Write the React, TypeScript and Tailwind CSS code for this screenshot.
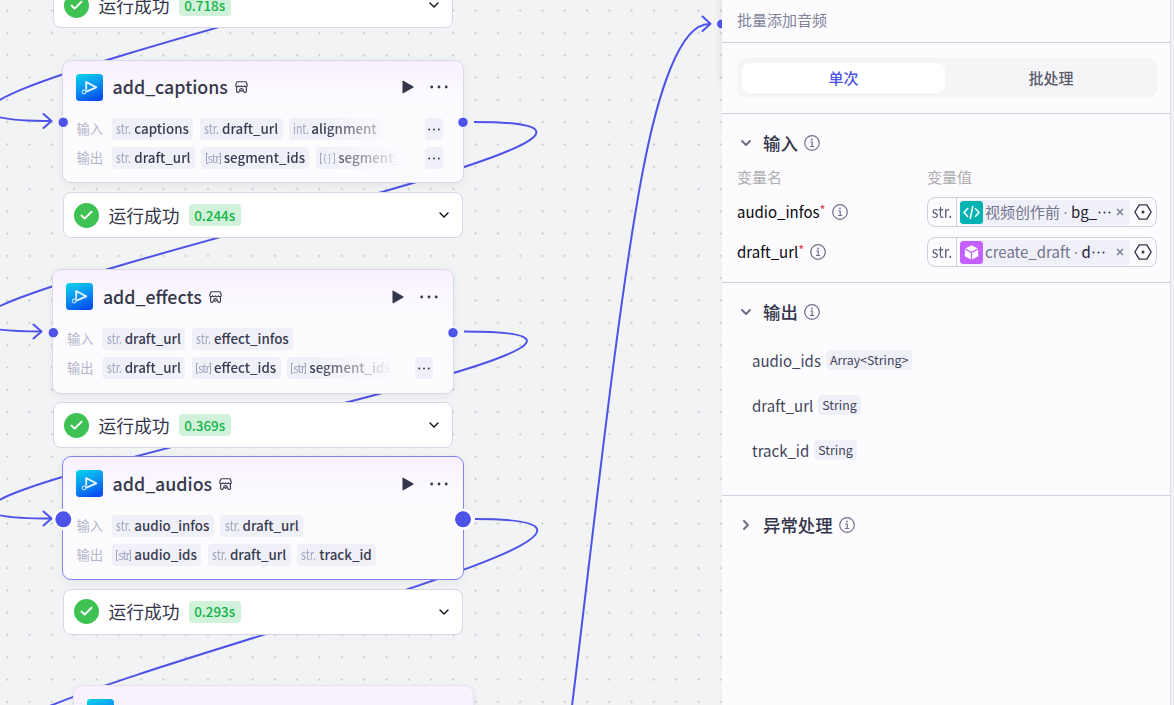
import React from 'react';
import { Check, ChevronDown, ChevronRight } from 'lucide-react';

type Variable = { type: string; name: string };

type NodeData = {
  title: string;
  position: string;
  selected?: boolean;
  inputs: Variable[];
  outputs: Variable[];
  moreInputs?: boolean;
  moreOutputs?: boolean;
};

const nodes: NodeData[] = [
  {
    title: 'add_captions',
    position: 'left-[62px] top-[59.5px] w-[402px] h-[123.5px]',
    inputs: [
      { type: 'str', name: 'captions' },
      { type: 'str', name: 'draft_url' },
      { type: 'int', name: 'alignment' }
    ],
    outputs: [
      { type: 'str', name: 'draft_url' },
      { type: '[str]', name: 'segment_ids' },
      { type: '[{}]', name: 'segment_' }
    ],
    moreInputs: true,
    moreOutputs: true
  },
  {
    title: 'add_effects',
    position: 'left-[52.4px] top-[269.4px] w-[401.4px] h-[124.4px]',
    inputs: [
      { type: 'str', name: 'draft_url' },
      { type: 'str', name: 'effect_infos' }
    ],
    outputs: [
      { type: 'str', name: 'draft_url' },
      { type: '[str]', name: 'effect_ids' },
      { type: '[str]', name: 'segment_ids' }
    ],
    moreOutputs: true
  },
  {
    title: 'add_audios',
    position: 'left-[62px] top-[456.4px] w-[402px] h-[124px]',
    selected: true,
    inputs: [
      { type: 'str', name: 'audio_infos' },
      { type: 'str', name: 'draft_url' }
    ],
    outputs: [
      { type: '[str]', name: 'audio_ids' },
      { type: 'str', name: 'draft_url' },
      { type: 'str', name: 'track_id' }
    ]
  }
];

const results = [
  { time: '0.718s', position: 'left-[53px] top-[-18px]' },
  { time: '0.244s', position: 'left-[63px] top-[192px]' },
  { time: '0.369s', position: 'left-[53px] top-[402px]' },
  { time: '0.293s', position: 'left-[63px] top-[588.5px]' }
];

const wires = [
  'M464 -89 C789 -89 -273 121 52 121',
  'M474 122 C802 122 -286 331.5 42 331.5',
  'M464 331.5 C790 331.5 -274 518.5 52 518.5',
  'M475 519 C799 519 -262 747.5 63 747.5',
  'M572 706 C592 545 618 300 643 170 C658 92 680 24 709 24'
];

const arrows = ['M43.5 114 L51.5 121 L43.5 128', 'M33.5 324.5 L41.5 331.5 L33.5 338.5', 'M43.5 511.5 L51.5 518.5 L43.5 525.5', 'M702.5 16.5 L710.5 23.8 L702.5 31'];

const ports = [
  { x: 63.2, y: 122.3, r: 4.7 },
  { x: 463, y: 122.3, r: 4.7 },
  { x: 53.3, y: 332.7, r: 4.7 },
  { x: 453, y: 332.7, r: 4.7 },
  { x: 63.3, y: 519.3, r: 8 },
  { x: 463, y: 519.3, r: 8 },
  { x: 721.5, y: 24, r: 4.5 }
];

const PluginIcon = () => (
  <svg className="size-[27px] shrink-0" viewBox="0 0 27 27" fill="none">
    <defs>
      <linearGradient id="plugin" x1="6" y1="0" x2="17" y2="27" gradientUnits="userSpaceOnUse">
        <stop stopColor="#08cdea" />
        <stop offset="0.45" stopColor="#0a98f2" />
        <stop offset="1" stopColor="#074df0" />
      </linearGradient>
    </defs>
    <rect width="27" height="27" rx="3.5" fill="url(#plugin)" />
    <path d="M10.2 15.8V8L20.3 13.4L9.8 17.8" stroke="#e4f4ff" strokeWidth="1.9" strokeLinejoin="round" />
    <circle cx="8.1" cy="18" r="1.9" stroke="#bfe4ff" strokeWidth="1.1" />
  </svg>
);

const StoreIcon = () => (
  <svg className="ml-[7px] h-[12px] w-[13px] shrink-0" viewBox="0 0 13 12" fill="none" stroke="#3b3d50" strokeWidth="1.15" strokeLinejoin="round" strokeLinecap="round">
    <path d="M2.6 0.7H10.4Q11.3 0.7 11.5 1.5L12.3 4.4C12.3 5.9 10.1 6.1 9.4 4.8C8.8 6 7.1 6 6.5 4.8C5.9 6 4.2 6 3.6 4.8C2.9 6.1 0.7 5.9 0.7 4.4L1.5 1.5Q1.7 0.7 2.6 0.7Z" />
    <path d="M1.6 6.2V10.4Q1.6 11.3 2.5 11.3H3.7L4.8 9.3L6.5 10.3L8.2 9.3L9.3 11.3H10.5Q11.4 11.3 11.4 10.4V6.2" />
    <path d="M4.6 8.2L6.5 7.6L8.4 8.2" />
  </svg>
);

const InfoIcon = () => (
  <svg className="size-4 shrink-0" viewBox="0 0 16 16" fill="none" stroke="#6c6f87" strokeWidth="1.2">
    <circle cx="8" cy="8" r="7.3" />
    <path d="M6.3 7H8.2V11.3M6 11.5H10.2" />
    <circle cx="7.9" cy="4.5" r="0.9" fill="#6c6f87" stroke="none" />
  </svg>
);

const HexIcon = () => (
  <svg className="h-4 w-[18px] shrink-0" viewBox="0 0 18 16" fill="none" stroke="#33354a" strokeWidth="1.4" strokeLinejoin="round">
    <path d="M5.2 0.9H12.8L17.1 8L12.8 15.1H5.2L0.9 8Z" />
    <circle cx="9" cy="8" r="1.5" fill="#33354a" stroke="none" />
  </svg>
);

const Dots = ({ small }: { small?: boolean }) => (
  <svg className={small ? 'h-[3px] w-[12px]' : 'h-[4px] w-[18px]'} viewBox={small ? '0 0 12 3' : '0 0 18 4'} fill="#33354a">
    {small ? (
      <>
        <circle cx="1.2" cy="1.5" r="0.95" />
        <circle cx="6" cy="1.5" r="0.95" />
        <circle cx="10.8" cy="1.5" r="0.95" />
      </>
    ) : (
      <>
        <circle cx="1.7" cy="2" r="1.4" />
        <circle cx="9" cy="2" r="1.4" />
        <circle cx="16.2" cy="2" r="1.4" />
      </>
    )}
  </svg>
);

const TypeLabel = ({ type }: { type: string }) => {
  if (type === '[str]') {
    return (
      <span className="flex w-[16px] shrink-0 items-center text-[#a2a4bd]">
        <span className="h-[11px] w-[2px] border-y border-l border-[#a2a4bd]" />
        <span className="flex w-[11px] justify-center text-[11.5px] leading-3 tracking-[-0.9px]">str</span>
        <span className="h-[11px] w-[2px] border-y border-r border-[#a2a4bd]" />
      </span>
    );
  }
  if (type === '[{}]') {
    return (
      <span className="flex w-[16px] shrink-0 items-center text-[#a2a4bd]">
        <span className="h-[11px] w-[2px] border-y border-l border-[#a2a4bd]" />
        <span className="flex w-[11px] justify-center text-[10px] leading-3 tracking-[1px]">{'{}'}</span>
        <span className="h-[11px] w-[2px] border-y border-r border-[#a2a4bd]" />
      </span>
    );
  }
  return (
    <span className="flex h-5 w-[16px] shrink-0 items-center pb-[2px]">
      <span className="inline-block origin-left scale-x-[0.75] text-[14px] leading-4 text-[#a2a4bd]">{type}.</span>
    </span>
  );
};

const VariableRow = ({ label, items, more }: { label: string; items: Variable[]; more?: boolean }) => (
  <div className="flex h-[22px] items-center">
    <span className="w-[36px] shrink-0 pl-[0.5px] text-[13.3px] text-[#b4b5c9]">{label}</span>
    <div
      className={
        more
          ? 'flex w-[292px] shrink-0 gap-[6.5px] [mask-image:linear-gradient(90deg,#000_73%,transparent_100%)]'
          : 'flex gap-[6.5px]'
      }
    >
      {items.map((item, index) => (
        <span key={index} className="flex h-[22px] shrink-0 items-center gap-[2px] rounded-[4px] bg-[#f0f0f8] px-[4.3px]">
          <TypeLabel type={item.type} />
          <span className="text-[13.35px] font-medium leading-5 text-[#393b50]">{item.name}</span>
        </span>
      ))}
    </div>
    {more && (
      <span className="ml-[20.5px] flex h-[22px] w-[18px] items-center justify-center rounded-[4px] bg-[#f0f0f8]">
        <Dots small />
      </span>
    )}
  </div>
);

const FlowNode = ({ node }: { node: NodeData }) => (
  <div
    className={`absolute ${node.position} rounded-[9px] border bg-[#fcfcff] bg-linear-to-b from-[#f9f0ff] to-[#fcfcff] to-35% px-[13px] pt-[13px] shadow-[0_2px_8px_rgba(0,0,0,0.06)] ${
      node.selected ? 'border-[#8583f3]' : 'border-[#d8d8e8]'
    }`}
  >
    <div className="flex h-[27px] items-center">
      <PluginIcon />
      <span className="-mt-[2px] ml-[9.5px] text-[17.8px] font-medium leading-6 text-[#35374a]">{node.title}</span>
      <StoreIcon />
      <svg className="ml-auto h-[14px] w-[12px]" viewBox="0 0 12 14" fill="#33354a">
        <path d="M0.5 1.2Q0.5 0.4 1.3 0.8L11.4 6.4Q12 7 11.4 7.6L1.3 13.2Q0.5 13.6 0.5 12.8Z" />
      </svg>
      <span className="ml-[16px] mr-[2px] flex items-center">
        <Dots />
      </span>
    </div>
    <div className="mt-[17.6px] flex flex-col gap-[7.3px]">
      <VariableRow label="输入" items={node.inputs} more={node.moreInputs} />
      <VariableRow label="输出" items={node.outputs} more={node.moreOutputs} />
    </div>
  </div>
);

const RunResult = ({ time, position }: { time: string; position: string }) => (
  <div className={`absolute ${position} flex h-[46px] w-[399.5px] items-center rounded-[8px] border border-[#d6d6e4] bg-white pl-[9.5px] pr-[10px]`}>
    <span className="flex size-[25px] items-center justify-center rounded-full bg-[#3ec254] text-white">
      <Check size={15} strokeWidth={3} />
    </span>
    <span className="ml-[10px] text-[17.8px] text-[#33354a]">运行成功</span>
    <span className="ml-[9px] flex h-[22px] w-[52px] items-center justify-center rounded-[4px] bg-[#d2f1db] text-[13.4px] font-medium text-[#10b546]">
      {time}
    </span>
    <ChevronDown className="ml-auto text-[#101018]" size={16} strokeWidth={2.1} />
  </div>
);

const Canvas = () => (
  <div className="relative h-[705px] w-[722px] shrink-0 overflow-hidden bg-[#f2f3f5]">
    <svg className="absolute inset-0" width="722" height="705" fill="none">
      <defs>
        <pattern id="grid" x="-3.85" y="-0.55" width="22.3" height="22.3" patternUnits="userSpaceOnUse">
          <circle cx="11.15" cy="11.15" r="0.95" fill="#b9babf" />
        </pattern>
      </defs>
      <rect width="722" height="705" fill="url(#grid)" />
      {wires.map((d) => (
        <path key={d} d={d} stroke="#4d53e8" strokeWidth="2" />
      ))}
      {arrows.map((d) => (
        <path key={d} d={d} stroke="#4d53e8" strokeWidth="2" strokeLinecap="round" strokeLinejoin="round" />
      ))}
    </svg>

    {nodes.map((node) => (
      <FlowNode key={node.title} node={node} />
    ))}
    {results.map((result) => (
      <RunResult key={result.time} {...result} />
    ))}

    <div className="absolute left-[73px] top-[685px] h-[124px] w-[401px] rounded-[9px] border border-[#e3e1ee] bg-[#f9f1fe] px-[13px] pt-[13px] shadow-[0_2px_8px_rgba(0,0,0,0.06)]">
      <PluginIcon />
    </div>
    <div className="absolute left-[722px] top-[-38px] h-[122px] w-[401px] rounded-[9px] shadow-[0_2px_10px_rgba(0,0,0,0.1)]" />

    <svg className="absolute inset-0" width="722" height="705">
      {ports.map((port, index) => (
        <circle key={index} cx={port.x} cy={port.y} r={port.r + (port.r > 6 ? 1.3 : 0.5)} fill="#4d53e8" stroke="#fff" strokeWidth={port.r > 6 ? 2.6 : 1} />
      ))}
    </svg>
  </div>
);

const InputRow = ({ name, icon, source, field }: { name: string; icon: React.ReactNode; source: string; field: string }) => (
  <div className="flex h-[40px] items-center">
    <div className="flex w-[190px] shrink-0 items-center text-[15px] text-[#08080d]">
      {name}
      <span className="-mt-1 mr-[6px] text-[13px] text-[#e5404a]">*</span>
      <InfoIcon />
    </div>
    <div className="flex h-[30px] w-[230px] shrink-0 items-center rounded-[8px] border border-[#cdcde0]">
      <span className="flex h-full w-[29px] shrink-0 items-center justify-center border-r border-[#cdcde0] text-[15.5px] text-[#5c5f78]">
        <span className="inline-block scale-x-[0.93]">str.</span>
      </span>
      <div className="ml-[3px] flex h-[25px] w-[170px] shrink-0 items-center rounded-[4px] bg-[#f0f0f8]">
        {icon}
        <span className="ml-[2px] whitespace-nowrap text-[15px] text-[#73758e]">{source}</span>
        <span className="flex w-[11px] shrink-0 justify-center font-['Open_Sans',sans-serif] text-[15px] text-[#73758e]">·</span>
        <span className="text-[15px] text-[#1f2133]">{field}</span>
        <svg className="ml-px h-[3px] w-[13px] shrink-0" viewBox="0 0 13 3" fill="#33354a">
          <circle cx="1.5" cy="1.5" r="1" />
          <circle cx="6.5" cy="1.5" r="1" />
          <circle cx="11.5" cy="1.5" r="1" />
        </svg>
        <svg className="ml-auto mr-[6px] size-[8px] shrink-0" viewBox="0 0 8 8" stroke="#6c6f87" strokeWidth="1.2">
          <path d="M1 1L7 7M7 1L1 7" />
        </svg>
      </div>
      <span className="ml-[4px]">
        <HexIcon />
      </span>
    </div>
  </div>
);

const SectionTitle = ({ title, open = true }: { title: string; open?: boolean }) => (
  <div className="flex h-[26px] items-center text-[#6c6f87]">
    <span className="ml-px w-[25px]">{open ? <ChevronDown size={16} strokeWidth={3} /> : <ChevronRight size={16} strokeWidth={3} />}</span>
    <span className="mr-[6px] text-[17.4px] font-medium text-[#33354a]">{title}</span>
    <InfoIcon />
  </div>
);

const OutputRow = ({ name, type }: { name: string; type: string }) => (
  <div className="flex h-[45px] items-center gap-[5px]">
    <span className="mt-[3px] text-[15px] text-[#42445a]">{name}</span>
    <span className="flex h-[20px] items-center rounded-[4px] bg-[#f0f0f8] px-[4px] pt-px text-[12.4px] text-[#42445a]">{type}</span>
  </div>
);

const CodeIcon = () => (
  <svg className="size-[23px] shrink-0" viewBox="0 0 23 23" fill="none">
    <rect width="23" height="23" rx="3.5" fill="#00b2b2" />
    <path d="M7.7 7.5L4 11.5L7.7 15.5M15.3 7.5L19 11.5L15.3 15.5M12.7 5.5L10.3 17.5" stroke="#fff" strokeWidth="1.6" strokeLinecap="round" strokeLinejoin="round" />
  </svg>
);

const CubeIcon = () => (
  <svg className="size-[23px] shrink-0" viewBox="0 0 23 23">
    <rect width="23" height="23" rx="3.5" fill="#c45fff" />
    <path d="M11.5 4.2L17.7 7.5L11.5 10.8L5.3 7.5Z" fill="#fff" />
    <path d="M4.8 8.6L10.9 11.9V18.6L5.2 15.6Q4.8 15.3 4.8 14.8Z" fill="#fff" />
    <path d="M18.2 8.6L12.1 11.9V18.6L17.8 15.6Q18.2 15.3 18.2 14.8Z" fill="#fff" />
  </svg>
);

const SettingsPanel = () => (
  <div className="h-[705px] w-[448px] shrink-0 bg-[#fcfcff]">
    <div className="flex h-[43px] items-center border-b border-[#d0d0e0] px-[15px] pb-[2px] text-[15px] text-[#80829a]">批量添加音频</div>

    <div className="h-[71px] border-b border-[#d0d0e0] px-[15px] pt-[15px]">
      <div className="flex h-[40px] w-[420px] rounded-[9px] bg-[#f5f5f7] p-[5px] text-[15px] font-medium">
        <span className="flex w-[203px] items-center justify-center rounded-[8px] bg-white text-[#4d53e8]">单次</span>
        <span className="flex flex-1 items-center justify-center pl-[5px] text-[#5a5b6b]">批处理</span>
      </div>
    </div>

    <div className="h-[169px] border-b border-[#d0d0e0] px-[15px] pt-[16px]">
      <SectionTitle title="输入" />
      <div className="mt-[9px] flex h-[24px] items-center text-[15px] text-[#adadb0]">
        <span className="w-[190px]">变量名</span>
        <span>变量值</span>
      </div>
      <div className="mt-[3px]">
        <InputRow name="audio_infos" icon={<CodeIcon />} source="视频创作前" field="bg_" />
        <InputRow name="draft_url" icon={<CubeIcon />} source="create_draft" field="d" />
      </div>
    </div>

    <div className="h-[213px] border-b border-[#d0d0e0] px-[15px] pt-[16px]">
      <SectionTitle title="输出" />
      <div className="mt-[12px] pl-[15px]">
        <OutputRow name="audio_ids" type="Array<String>" />
        <OutputRow name="draft_url" type="String" />
        <OutputRow name="track_id" type="String" />
      </div>
    </div>

    <div className="px-[15px] pt-[16px]">
      <SectionTitle title="异常处理" open={false} />
    </div>
  </div>
);

const App = () => {
  return (
    <div className="flex h-[705px] w-[1174px] overflow-hidden font-['Noto_Sans_CJK_SC',sans-serif]">
      <Canvas />
      <SettingsPanel />
      <div className="h-full flex-1 border-l border-[#dfe0ea] bg-[#f0f2f6]" />
    </div>
  );
};

export default App;
